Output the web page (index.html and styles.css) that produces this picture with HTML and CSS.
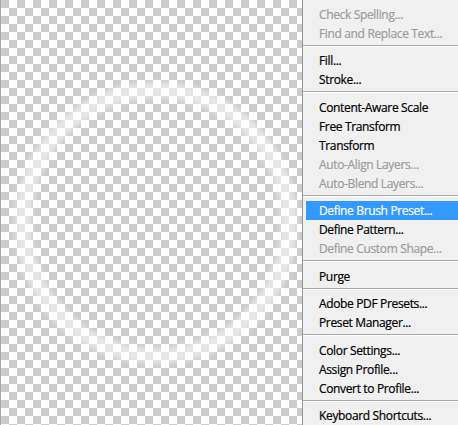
FILE: index.html
```html
<!DOCTYPE html>
<html lang="en">
<head>
    <meta charset="UTF-8">
    <title>Edit</title>
    <link rel="stylesheet" href="styles.css">
</head>
<body>
    <div class="workspace">
        <!-- transparent layer with the brush stroke -->
        <div class="canvas">
            <svg class="stroke" width="301" height="425" viewBox="0 0 301 425">
                <defs>
                    <filter id="soft" x="-20%" y="-20%" width="140%" height="140%">
                        <feGaussianBlur stdDeviation="2.5"/>
                    </filter>
                </defs>
                <circle cx="155" cy="223" r="133" fill="none" stroke="#ffffff" stroke-opacity="0.5" stroke-width="16" filter="url(#soft)"/>
            </svg>
        </div>

        <ul class="menu">
            <li class="item disabled">Check Spelling...</li>
            <li class="item disabled">Find and Replace Text...</li>
            <li class="sep"></li>
            <li class="item">Fill...</li>
            <li class="item">Stroke...</li>
            <li class="sep tall"></li>
            <li class="item">Content-Aware Scale</li>
            <li class="item">Free Transform</li>
            <li class="item">Transform</li>
            <li class="item disabled">Auto-Align Layers...</li>
            <li class="item disabled">Auto-Blend Layers...</li>
            <li class="sep"></li>
            <li class="item active">Define Brush Preset...</li>
            <li class="item">Define Pattern...</li>
            <li class="item disabled">Define Custom Shape...</li>
            <li class="sep tall"></li>
            <li class="item">Purge</li>
            <li class="sep"></li>
            <li class="item">Adobe PDF Presets...</li>
            <li class="item">Preset Manager...</li>
            <li class="sep tall"></li>
            <li class="item">Color Settings...</li>
            <li class="item">Assign Profile...</li>
            <li class="item">Convert to Profile...</li>
            <li class="sep"></li>
            <li class="item">Keyboard Shortcuts...</li>
        </ul>
    </div>
</body>
</html>
```

FILE: styles.css
```css
body {
    margin: 0;
    padding: 0;
    font-family: "Open Sans", "Noto Sans", sans-serif;
    overflow: hidden;
}

.workspace {
    display: flex;
    height: 425px;
}

/* checkerboard = transparent pixels */
.canvas {
    width: 301px;
    flex-shrink: 0;
    border-left: 1px solid #a8a8a8;
    background-color: #ffffff;
    background-image:
        linear-gradient(45deg, #cccccc 25%, transparent 25%, transparent 75%, #cccccc 75%),
        linear-gradient(45deg, #cccccc 25%, transparent 25%, transparent 75%, #cccccc 75%);
    background-size: 16px 16px;
    background-position: 8px 0, 0 8px;
}

.stroke {
    display: block;
}

.menu {
    flex: 1;
    list-style: none;
    margin: 0;
    padding: 5px 0 0 3px;
    background: #f0f0f0;
    border-left: 1px solid #979797;
    font-size: 12px;
    letter-spacing: -0.35px;
    color: #000000;
    -webkit-text-stroke: 0.2px currentColor;
}

.item {
    height: 19px;
    line-height: 19px;
    padding-left: 13px;
    white-space: nowrap;
}

.item.disabled {
    color: #9c9c9c;
}

.item.active {
    background: #3399ff;
    color: #ffffff;
}

.sep {
    height: 8px;
    position: relative;
}

.sep.tall {
    height: 9px;
}

.sep::after {
    content: "";
    position: absolute;
    left: -3px;
    right: 0;
    top: 2px;
    height: 1px;
    background: #a8a8a8;
    border-bottom: 1px solid #ffffff;
}
```
